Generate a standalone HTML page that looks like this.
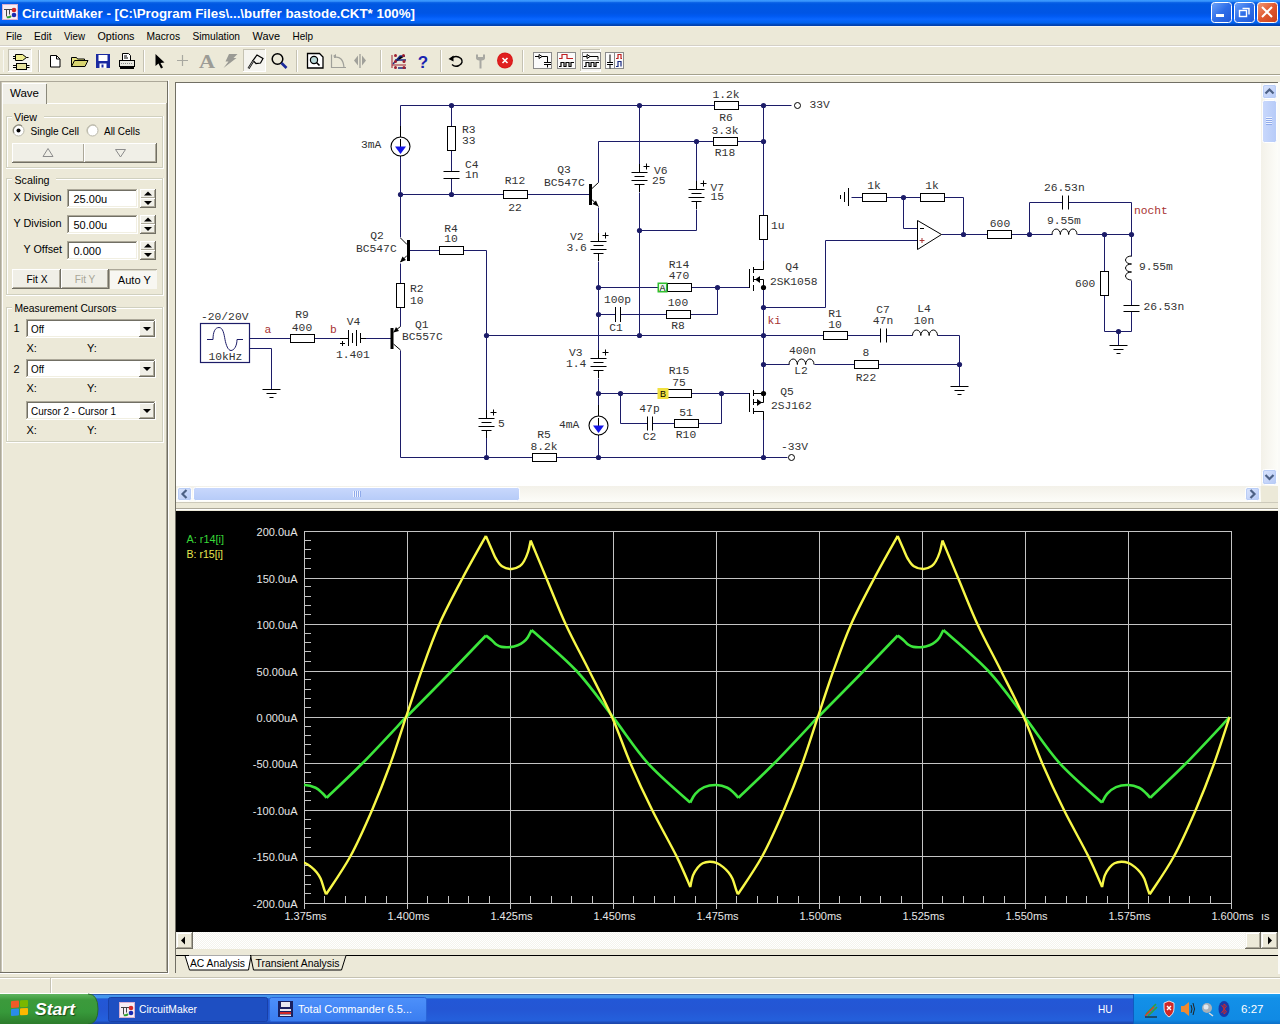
<!DOCTYPE html>
<html><head><meta charset="utf-8"><title>CircuitMaker</title>
<style>
html,body{margin:0;padding:0;width:1280px;height:1024px;overflow:hidden;background:#ece9d8;}
svg{display:block;position:absolute;left:0;top:0}
</style></head><body>
<svg width="1280" height="1024" viewBox="0 0 1280 1024">
<rect x="0" y="0" width="1280" height="1024" fill="#ece9d8"/>
<defs>
<linearGradient id="tb" x1="0" y1="0" x2="0" y2="1">
<stop offset="0" stop-color="#3c9cff"/><stop offset="0.05" stop-color="#3590fa"/><stop offset="0.1" stop-color="#0a62e6"/><stop offset="0.16" stop-color="#0058e2"/>
<stop offset="0.5" stop-color="#0055e5"/><stop offset="0.62" stop-color="#005af2"/><stop offset="0.74" stop-color="#0a66ff"/><stop offset="0.88" stop-color="#0062ee"/><stop offset="0.95" stop-color="#0045b8"/><stop offset="1" stop-color="#003ea8"/></linearGradient>
<linearGradient id="btnb" x1="0" y1="0" x2="1" y2="1"><stop offset="0" stop-color="#6ea4fa"/><stop offset="0.5" stop-color="#2f6ee8"/><stop offset="1" stop-color="#2059d8"/></linearGradient>
<linearGradient id="btnr" x1="0" y1="0" x2="1" y2="1"><stop offset="0" stop-color="#f09a78"/><stop offset="0.5" stop-color="#e0582e"/><stop offset="1" stop-color="#c8401c"/></linearGradient>
</defs>
<rect x="0" y="0" width="1280" height="26" fill="url(#tb)" />
<rect x="2" y="4" width="16" height="16" fill="#f6eef4" />
<g transform="translate(2,4)"><rect x="0.5" y="0.5" width="15" height="15" fill="none" stroke="#d8b0d0"/><path d="M2 5.5h8M4.5 5.5v7M7.5 5.5v5" stroke="#444" stroke-width="1" fill="none"/><circle cx="12" cy="6" r="2.3" fill="#d42828"/><circle cx="12" cy="11" r="2.3" fill="#1a2ab0"/><path d="M5 13q2 1 4 -1" stroke="#30a030" stroke-width="2" fill="none"/></g>
<text x="22" y="18" font-family="Liberation Sans" font-size="13" fill="#fff" font-weight="bold" textLength="393" lengthAdjust="spacingAndGlyphs" style="paint-order:stroke">CircuitMaker - [C:\Program Files\...\buffer bastode.CKT* 100%]</text>
<rect x="1211.5" y="2.5" width="20" height="20" rx="3" fill="url(#btnb)" stroke="#fff" stroke-width="1"/>
<rect x="1234.5" y="2.5" width="20" height="20" rx="3" fill="url(#btnb)" stroke="#fff" stroke-width="1"/>
<rect x="1257.5" y="2.5" width="20" height="20" rx="3" fill="url(#btnr)" stroke="#fff" stroke-width="1"/>
<rect x="1216" y="14" width="8" height="3" fill="#fff"/>
<rect x="1239.5" y="10.5" width="7" height="6" fill="none" stroke="#fff" stroke-width="1.4"/><path d="M1242.5 8.5h6.5v6" fill="none" stroke="#fff" stroke-width="1.4"/>
<path d="M1262 7l10 10M1272 7l-10 10" stroke="#fff" stroke-width="2"/>
<rect x="0" y="26" width="1280" height="50" fill="#ece9d8" />
<rect x="0" y="26" width="1280" height="1" fill="#f4f4f0"/>
<text x="6" y="39.5" font-family="Liberation Sans" font-size="11" fill="#000" textLength="16" lengthAdjust="spacingAndGlyphs" >File</text>
<text x="34" y="39.5" font-family="Liberation Sans" font-size="11" fill="#000" textLength="17.5" lengthAdjust="spacingAndGlyphs" >Edit</text>
<text x="64" y="39.5" font-family="Liberation Sans" font-size="11" fill="#000" textLength="21" lengthAdjust="spacingAndGlyphs" >View</text>
<text x="97.5" y="39.5" font-family="Liberation Sans" font-size="11" fill="#000" textLength="37" lengthAdjust="spacingAndGlyphs" >Options</text>
<text x="146.5" y="39.5" font-family="Liberation Sans" font-size="11" fill="#000" textLength="33.5" lengthAdjust="spacingAndGlyphs" >Macros</text>
<text x="192.5" y="39.5" font-family="Liberation Sans" font-size="11" fill="#000" textLength="47.5" lengthAdjust="spacingAndGlyphs" >Simulation</text>
<text x="252.5" y="39.5" font-family="Liberation Sans" font-size="11" fill="#000" textLength="27.5" lengthAdjust="spacingAndGlyphs" >Wave</text>
<text x="292.5" y="39.5" font-family="Liberation Sans" font-size="11" fill="#000" textLength="20.5" lengthAdjust="spacingAndGlyphs" >Help</text>
<rect x="0" y="45" width="1280" height="1" fill="#d4d0c8"/>
<rect x="0" y="46" width="1280" height="1" fill="#ffffff"/>
<rect x="0" y="74" width="1280" height="1" fill="#a5a28d"/>
<rect x="0" y="75" width="1280" height="1" fill="#ffffff"/>
<rect x="3" y="50" width="1" height="22" fill="#f8f8f4"/>
<rect x="8" y="49" width="24" height="23" fill="#f5f4ef" /><rect x="8" y="49" width="24" height="1" fill="#c5c2b2"/><rect x="8" y="49" width="1" height="23" fill="#c5c2b2"/><rect x="8" y="71" width="24" height="1" fill="#ffffff"/><rect x="31" y="49" width="1" height="23" fill="#ffffff"/>
<path d="M15.5 54.5h7l4 3-4 3h-7z" fill="#f0ee90" stroke="#000"/><path d="M13 56.5h2.5M13 58.5h2.5M26.5 57.5h2" stroke="#000"/>
<rect x="16.5" y="63.5" width="10" height="6" fill="#e6e2a0" stroke="#000"/><path d="M13 65.5h3.5M13 67.5h3.5M26.5 65.5h3M26.5 67.5h3" stroke="#000"/>
<rect x="38" y="50" width="1" height="22" fill="#c5c2b2"/><rect x="39" y="50" width="1" height="22" fill="#ffffff"/>
<path d="M50.5 55.5h6l3.5 3.5v8h-9.5z" fill="#fff" stroke="#000"/><path d="M56.5 55.5v3.5h3.5" fill="none" stroke="#000"/>
<path d="M71.5 57.5h5l1 1.5h7v7.5h-13z" fill="#e8e480" stroke="#000"/><path d="M71.5 66.5l3-6h13.5l-3 6z" fill="#d8d470" stroke="#000"/>
<rect x="96" y="54" width="14" height="14" fill="#1a2aa0"/><rect x="98.5" y="55" width="9" height="6" fill="#fff"/><rect x="99.5" y="63.5" width="7" height="4.5" fill="#fff"/><rect x="101.5" y="64.5" width="2" height="3" fill="#1a2aa0"/>
<path d="M122.5 53.5h6l2 2v5h-8z" fill="#fff" stroke="#000"/><path d="M124 56h3M124 58h4" stroke="#000"/><rect x="119.5" y="60.5" width="15" height="6" fill="#e8e8e0" stroke="#000"/><rect x="120" y="67" width="14" height="2" fill="#000"/><path d="M121 63.5h12" stroke="#888" stroke-dasharray="1 1"/>
<rect x="143" y="50" width="1" height="22" fill="#c5c2b2"/><rect x="144" y="50" width="1" height="22" fill="#ffffff"/>
<path d="M155.5 54l0 12 3-2.5 2.5 5 2-1-2.5-4.5 4 -0.5z" fill="#000"/>
<path d="M177 60.5h11M182.5 55v11" stroke="#a8a8a0" stroke-width="1.2"/>
<text x="199" y="68" font-family="Liberation Serif" font-size="19" fill="#9c9c96" font-weight="bold" textLength="16" lengthAdjust="spacingAndGlyphs" >A</text>
<path d="M229 54h8.5l-4 4h3l-13 10 5-6.5h-3z" fill="#9a9a94"/>
<rect x="243" y="49" width="23" height="23" fill="#f5f4ef" /><rect x="243" y="49" width="23" height="1" fill="#c5c2b2"/><rect x="243" y="49" width="1" height="23" fill="#c5c2b2"/><rect x="243" y="71" width="23" height="1" fill="#ffffff"/><rect x="265" y="49" width="1" height="23" fill="#ffffff"/>
<path d="M257 55l6 3.5-2.5 4.5-4.5 0.5-3-3z" fill="none" stroke="#000" stroke-width="1.2"/><path d="M253.5 60.5l-5 8" stroke="#000" stroke-width="2.2"/><path d="M253.5 60.5l-5 8" stroke="#fff" stroke-width="0.6"/>
<circle cx="277.5" cy="59" r="5.3" fill="none" stroke="#000" stroke-width="1.5"/><path d="M281.5 63l5 5" stroke="#1a2a9a" stroke-width="2.6"/>
<rect x="296" y="50" width="1" height="22" fill="#c5c2b2"/><rect x="297" y="50" width="1" height="22" fill="#ffffff"/>
<path d="M307.5 53.5h12l3.5 3.5v11h-15.5z" fill="#fff" stroke="#000" stroke-width="1.3"/><circle cx="314" cy="60" r="3.6" fill="#b8d8d8" stroke="#000" stroke-width="1.2"/><path d="M316.5 62.5l3 3" stroke="#000" stroke-width="1.6"/>
<path d="M331.5 54.5v13h14.5M334 57.5q9 -2 10 10" fill="none" stroke="#a0a09a" stroke-width="1.2"/><path d="M333 56l3-2v4z" fill="#a0a09a"/>
<path d="M360 54v14" stroke="#a0a09a" stroke-width="1.3"/><path d="M358 55.5v10l-4-5z M362 55.5v10l4-5z" fill="#a0a09a"/>
<rect x="380" y="50" width="1" height="22" fill="#c5c2b2"/><rect x="381" y="50" width="1" height="22" fill="#ffffff"/>
<path d="M392 55v13M392 65h14" stroke="#a02030" stroke-width="1"/><path d="M393 64l7-8h5M395 60h11M398 68h8" stroke="#1a2a80" stroke-width="1.3"/><circle cx="395.5" cy="55.5" r="1.5" fill="#a02030"/><circle cx="403.5" cy="55.5" r="1.5" fill="#a02030"/><circle cx="395.5" cy="61.5" r="1.5" fill="#a02030"/><circle cx="404" cy="61.5" r="1.5" fill="#a02030"/><circle cx="395.5" cy="67.5" r="1.5" fill="#a02030"/><circle cx="404" cy="67.5" r="1.5" fill="#a02030"/>
<text x="423" y="68" font-family="Liberation Sans" font-size="17" fill="#1a24b0" font-weight="bold" text-anchor="middle" >?</text>
<rect x="440" y="50" width="1" height="22" fill="#c5c2b2"/><rect x="441" y="50" width="1" height="22" fill="#ffffff"/>
<path d="M451 58.5q5-4 10 0q3 4 -2 7q-4 2 -7 -1" fill="none" stroke="#000" stroke-width="1.4"/><path d="M448.5 59l5 -3.5v6z" fill="#000"/>
<path d="M476 54.5v3.5q0 2 3.5 2.5v8h2v-8q3.5-0.5 3.5-2.5v-3.5l-2 0v2.5h-5v-2.5z" fill="#a8a8a2"/>
<circle cx="505" cy="60.5" r="8" fill="#d81818"/><circle cx="505" cy="60.5" r="7" fill="#e02020"/><path d="M502.5 58l5 5M507.5 58l-5 5" stroke="#fff" stroke-width="1.6"/>
<rect x="522" y="50" width="1" height="22" fill="#c5c2b2"/><rect x="523" y="50" width="1" height="22" fill="#ffffff"/>
<rect x="533.5" y="52.5" width="18" height="16" fill="#fafafa" stroke="#8a8a8a"/><path d="M535 56.5h4M539 54.5v4l3 -2z" stroke="#000" fill="none"/><path d="M542 56.5h5.5v6M544 62.5h7M544 64.5h7M547.5 64.5v3" stroke="#000" fill="none"/>
<rect x="557.5" y="52.5" width="18" height="16" fill="#fafafa" stroke="#8a8a8a"/><path d="M559 58.5h3v-4h5v4h6" stroke="#c02020" fill="none" stroke-width="1.2"/><path d="M559 66.5h2v-4h3v4h2v-4h3v4h2v-4h3" stroke="#000" fill="none" stroke-width="1.2"/>
<rect x="580" y="49" width="21" height="23" fill="#f5f4ef" /><rect x="580" y="49" width="21" height="1" fill="#c5c2b2"/><rect x="580" y="49" width="1" height="23" fill="#c5c2b2"/><rect x="580" y="71" width="21" height="1" fill="#ffffff"/><rect x="600" y="49" width="1" height="23" fill="#ffffff"/>
<rect x="582.5" y="52.5" width="18" height="16" fill="#fafafa" stroke="#8a8a8a"/><path d="M583 56.5h4M587 54.5v4l3 -2z" stroke="#000" fill="none"/><path d="M590 56.5h8v3" stroke="#000" fill="none"/><path d="M583 60.5h17" stroke="#888" fill="none"/><path d="M584 66.5h2v-4h3v4h2v-4h3v4h2v-4h3" stroke="#000" fill="none" stroke-width="1.2"/>
<rect x="605.5" y="52.5" width="18" height="16" fill="#fafafa" stroke="#8a8a8a"/><path d="M607 62.5h6M607 64.5h6M610 54.5v8M610 64.5v4" stroke="#000" fill="none"/><path d="M614.5 53v16" stroke="#888"/><path d="M616 58.5h2v-4h3v4h1" stroke="#c02020" fill="none" stroke-width="1.2"/><path d="M616 66.5h2v-5h3v5" stroke="#1a2a80" fill="none" stroke-width="1.2"/>
<rect x="0" y="81" width="168" height="1" fill="#aca899"/>
<rect x="0" y="81" width="1" height="892" fill="#aca899"/>
<rect x="1" y="82" width="1" height="890" fill="#c8c5b6"/>
<rect x="167" y="81" width="1" height="892" fill="#716f64"/>
<rect x="0" y="972" width="168" height="1" fill="#716f64"/>
<rect x="168" y="80" width="1" height="894" fill="#ffffff"/>
<rect x="0" y="973" width="169" height="1" fill="#ffffff"/>
<rect x="2" y="103" width="165" height="1" fill="#ffffff"/>
<rect x="2" y="103" width="1" height="868" fill="#ffffff"/>
<rect x="166" y="103" width="1" height="868" fill="#aca899"/>
<rect x="2" y="83" width="45" height="21" fill="#f0efe8" />
<rect x="2" y="83" width="44" height="1" fill="#ffffff"/>
<rect x="2" y="83" width="1" height="21" fill="#ffffff"/>
<rect x="46" y="84" width="1" height="20" fill="#8a887a"/>
<text x="10" y="96.5" font-family="Liberation Sans" font-size="11" fill="#000" textLength="29" lengthAdjust="spacingAndGlyphs" >Wave</text>
<rect x="6" y="116" width="156" height="1" fill="#d0d0bf"/><rect x="7" y="117" width="155" height="1" fill="#ffffff"/><rect x="6" y="116" width="1" height="51" fill="#d0d0bf"/><rect x="7" y="117" width="1" height="50" fill="#ffffff"/><rect x="6" y="167" width="156" height="1" fill="#d0d0bf"/><rect x="6" y="168" width="157" height="1" fill="#ffffff"/><rect x="162" y="116" width="1" height="52" fill="#d0d0bf"/><rect x="163" y="116" width="1" height="53" fill="#ffffff"/><rect x="12" y="110" width="32" height="12" fill="#ece9d8" />
<text x="14" y="120.5" font-family="Liberation Sans" font-size="11" fill="#000" textLength="23" lengthAdjust="spacingAndGlyphs" >View</text>
<circle cx="18.5" cy="130.5" r="5.5" fill="#fff" stroke="#b8b6a8"/><path d="M14 133a5.5 5.5 0 0 1 8-7" fill="none" stroke="#8c8a7c" stroke-width="1.2"/><circle cx="18.5" cy="130.5" r="2" fill="#000"/>
<text x="30.5" y="134.5" font-family="Liberation Sans" font-size="11" fill="#000" textLength="48.5" lengthAdjust="spacingAndGlyphs" >Single Cell</text>
<circle cx="92.5" cy="130.5" r="5.5" fill="#fff" stroke="#b8b6a8"/><path d="M88 133a5.5 5.5 0 0 1 8-7" fill="none" stroke="#c0beb0" stroke-width="1.2"/>
<text x="104" y="134.5" font-family="Liberation Sans" font-size="11" fill="#000" textLength="36" lengthAdjust="spacingAndGlyphs" >All Cells</text>
<rect x="12" y="143" width="73" height="20" fill="#f0efe7" /><rect x="12" y="143" width="73" height="1" fill="#ffffff"/><rect x="12" y="143" width="1" height="20" fill="#ffffff"/><rect x="12" y="162" width="73" height="1" fill="#716f64"/><rect x="84" y="143" width="1" height="20" fill="#716f64"/><rect x="13" y="161" width="71" height="1" fill="#aca899"/><rect x="83" y="144" width="1" height="18" fill="#aca899"/>
<rect x="84" y="143" width="73" height="20" fill="#f0efe7" /><rect x="84" y="143" width="73" height="1" fill="#ffffff"/><rect x="84" y="143" width="1" height="20" fill="#ffffff"/><rect x="84" y="162" width="73" height="1" fill="#716f64"/><rect x="156" y="143" width="1" height="20" fill="#716f64"/><rect x="85" y="161" width="71" height="1" fill="#aca899"/><rect x="155" y="144" width="1" height="18" fill="#aca899"/>
<path d="M43 156.5h10l-5-8z" fill="none" stroke="#8c8c8c"/><path d="M115.5 149.5h10l-5 7.5z" fill="none" stroke="#8c8c8c"/>
<rect x="6" y="178" width="156" height="1" fill="#d0d0bf"/><rect x="7" y="179" width="155" height="1" fill="#ffffff"/><rect x="6" y="178" width="1" height="116" fill="#d0d0bf"/><rect x="7" y="179" width="1" height="115" fill="#ffffff"/><rect x="6" y="294" width="156" height="1" fill="#d0d0bf"/><rect x="6" y="295" width="157" height="1" fill="#ffffff"/><rect x="162" y="178" width="1" height="117" fill="#d0d0bf"/><rect x="163" y="178" width="1" height="118" fill="#ffffff"/><rect x="12" y="172" width="44" height="12" fill="#ece9d8" />
<text x="14.5" y="183.5" font-family="Liberation Sans" font-size="11" fill="#000" textLength="35" lengthAdjust="spacingAndGlyphs" >Scaling</text>
<text x="13.5" y="200.5" font-family="Liberation Sans" font-size="11" fill="#000" textLength="48" lengthAdjust="spacingAndGlyphs" >X Division</text>
<rect x="67" y="189" width="71" height="19" fill="#ffffff" /><rect x="67" y="189" width="71" height="1" fill="#aca899"/><rect x="67" y="189" width="1" height="19" fill="#aca899"/><rect x="68" y="190" width="69" height="1" fill="#716f64"/><rect x="68" y="190" width="1" height="17" fill="#716f64"/><rect x="67" y="207" width="71" height="1" fill="#ffffff"/><rect x="137" y="189" width="1" height="19" fill="#ffffff"/><rect x="68" y="206" width="69" height="1" fill="#f1efe2"/><rect x="136" y="190" width="1" height="17" fill="#f1efe2"/>
<text x="73.5" y="203" font-family="Liberation Sans" font-size="11" fill="#000" >25.00u</text>
<rect x="140" y="189" width="16" height="10" fill="#f0efe7" /><rect x="140" y="189" width="16" height="1" fill="#ffffff"/><rect x="140" y="189" width="1" height="10" fill="#ffffff"/><rect x="140" y="198" width="16" height="1" fill="#716f64"/><rect x="155" y="189" width="1" height="10" fill="#716f64"/><rect x="141" y="197" width="14" height="1" fill="#aca899"/><rect x="154" y="190" width="1" height="8" fill="#aca899"/><rect x="140" y="198" width="16" height="10" fill="#f0efe7" /><rect x="140" y="198" width="16" height="1" fill="#ffffff"/><rect x="140" y="198" width="1" height="10" fill="#ffffff"/><rect x="140" y="207" width="16" height="1" fill="#716f64"/><rect x="155" y="198" width="1" height="10" fill="#716f64"/><rect x="141" y="206" width="14" height="1" fill="#aca899"/><rect x="154" y="199" width="1" height="8" fill="#aca899"/><path d="M144.0 195.5h8l-4-4z" fill="#000"/><path d="M144.0 201h8l-4 4z" fill="#000"/>
<text x="13.5" y="226.5" font-family="Liberation Sans" font-size="11" fill="#000" textLength="48" lengthAdjust="spacingAndGlyphs" >Y Division</text>
<rect x="67" y="215" width="71" height="19" fill="#ffffff" /><rect x="67" y="215" width="71" height="1" fill="#aca899"/><rect x="67" y="215" width="1" height="19" fill="#aca899"/><rect x="68" y="216" width="69" height="1" fill="#716f64"/><rect x="68" y="216" width="1" height="17" fill="#716f64"/><rect x="67" y="233" width="71" height="1" fill="#ffffff"/><rect x="137" y="215" width="1" height="19" fill="#ffffff"/><rect x="68" y="232" width="69" height="1" fill="#f1efe2"/><rect x="136" y="216" width="1" height="17" fill="#f1efe2"/>
<text x="73.5" y="229" font-family="Liberation Sans" font-size="11" fill="#000" >50.00u</text>
<rect x="140" y="215" width="16" height="10" fill="#f0efe7" /><rect x="140" y="215" width="16" height="1" fill="#ffffff"/><rect x="140" y="215" width="1" height="10" fill="#ffffff"/><rect x="140" y="224" width="16" height="1" fill="#716f64"/><rect x="155" y="215" width="1" height="10" fill="#716f64"/><rect x="141" y="223" width="14" height="1" fill="#aca899"/><rect x="154" y="216" width="1" height="8" fill="#aca899"/><rect x="140" y="224" width="16" height="10" fill="#f0efe7" /><rect x="140" y="224" width="16" height="1" fill="#ffffff"/><rect x="140" y="224" width="1" height="10" fill="#ffffff"/><rect x="140" y="233" width="16" height="1" fill="#716f64"/><rect x="155" y="224" width="1" height="10" fill="#716f64"/><rect x="141" y="232" width="14" height="1" fill="#aca899"/><rect x="154" y="225" width="1" height="8" fill="#aca899"/><path d="M144.0 221.5h8l-4-4z" fill="#000"/><path d="M144.0 227h8l-4 4z" fill="#000"/>
<text x="23.5" y="252.5" font-family="Liberation Sans" font-size="11" fill="#000" textLength="38.5" lengthAdjust="spacingAndGlyphs" >Y Offset</text>
<rect x="67" y="241" width="71" height="19" fill="#ffffff" /><rect x="67" y="241" width="71" height="1" fill="#aca899"/><rect x="67" y="241" width="1" height="19" fill="#aca899"/><rect x="68" y="242" width="69" height="1" fill="#716f64"/><rect x="68" y="242" width="1" height="17" fill="#716f64"/><rect x="67" y="259" width="71" height="1" fill="#ffffff"/><rect x="137" y="241" width="1" height="19" fill="#ffffff"/><rect x="68" y="258" width="69" height="1" fill="#f1efe2"/><rect x="136" y="242" width="1" height="17" fill="#f1efe2"/>
<text x="73.5" y="255" font-family="Liberation Sans" font-size="11" fill="#000" >0.000</text>
<rect x="140" y="241" width="16" height="10" fill="#f0efe7" /><rect x="140" y="241" width="16" height="1" fill="#ffffff"/><rect x="140" y="241" width="1" height="10" fill="#ffffff"/><rect x="140" y="250" width="16" height="1" fill="#716f64"/><rect x="155" y="241" width="1" height="10" fill="#716f64"/><rect x="141" y="249" width="14" height="1" fill="#aca899"/><rect x="154" y="242" width="1" height="8" fill="#aca899"/><rect x="140" y="250" width="16" height="10" fill="#f0efe7" /><rect x="140" y="250" width="16" height="1" fill="#ffffff"/><rect x="140" y="250" width="1" height="10" fill="#ffffff"/><rect x="140" y="259" width="16" height="1" fill="#716f64"/><rect x="155" y="250" width="1" height="10" fill="#716f64"/><rect x="141" y="258" width="14" height="1" fill="#aca899"/><rect x="154" y="251" width="1" height="8" fill="#aca899"/><path d="M144.0 247.5h8l-4-4z" fill="#000"/><path d="M144.0 253h8l-4 4z" fill="#000"/>
<rect x="12" y="269" width="49" height="20" fill="#f0efe7" /><rect x="12" y="269" width="49" height="1" fill="#ffffff"/><rect x="12" y="269" width="1" height="20" fill="#ffffff"/><rect x="12" y="288" width="49" height="1" fill="#716f64"/><rect x="60" y="269" width="1" height="20" fill="#716f64"/><rect x="13" y="287" width="47" height="1" fill="#aca899"/><rect x="59" y="270" width="1" height="18" fill="#aca899"/>
<rect x="61" y="269" width="48" height="20" fill="#f0efe7" /><rect x="61" y="269" width="48" height="1" fill="#ffffff"/><rect x="61" y="269" width="1" height="20" fill="#ffffff"/><rect x="61" y="288" width="48" height="1" fill="#716f64"/><rect x="108" y="269" width="1" height="20" fill="#716f64"/><rect x="62" y="287" width="46" height="1" fill="#aca899"/><rect x="107" y="270" width="1" height="18" fill="#aca899"/>
<rect x="109" y="269" width="48" height="20" fill="#f8f7f2" /><rect x="109" y="269" width="48" height="1" fill="#aca899"/><rect x="109" y="269" width="1" height="20" fill="#aca899"/><rect x="110" y="270" width="46" height="1" fill="#dcdacc"/>
<text x="37" y="283" font-family="Liberation Sans" font-size="11" fill="#000" text-anchor="middle" textLength="21" lengthAdjust="spacingAndGlyphs" >Fit X</text>
<text x="85" y="283" font-family="Liberation Sans" font-size="11" fill="#a8a698" text-anchor="middle" textLength="20.5" lengthAdjust="spacingAndGlyphs" >Fit Y</text>
<text x="134.3" y="283.5" font-family="Liberation Sans" font-size="11" fill="#000" text-anchor="middle" textLength="33" lengthAdjust="spacingAndGlyphs" >Auto Y</text>
<rect x="6" y="307" width="156" height="1" fill="#d0d0bf"/><rect x="7" y="308" width="155" height="1" fill="#ffffff"/><rect x="6" y="307" width="1" height="134" fill="#d0d0bf"/><rect x="7" y="308" width="1" height="133" fill="#ffffff"/><rect x="6" y="441" width="156" height="1" fill="#d0d0bf"/><rect x="6" y="442" width="157" height="1" fill="#ffffff"/><rect x="162" y="307" width="1" height="135" fill="#d0d0bf"/><rect x="163" y="307" width="1" height="136" fill="#ffffff"/><rect x="12" y="301" width="104" height="12" fill="#ece9d8" />
<text x="14.5" y="311.5" font-family="Liberation Sans" font-size="11" fill="#000" textLength="102" lengthAdjust="spacingAndGlyphs" >Measurement Cursors</text>
<text x="13.5" y="332" font-family="Liberation Sans" font-size="11" fill="#000" >1</text>
<rect x="26" y="319" width="130" height="19" fill="#ffffff" /><rect x="26" y="319" width="130" height="1" fill="#aca899"/><rect x="26" y="319" width="1" height="19" fill="#aca899"/><rect x="27" y="320" width="128" height="1" fill="#716f64"/><rect x="27" y="320" width="1" height="17" fill="#716f64"/><rect x="26" y="337" width="130" height="1" fill="#ffffff"/><rect x="155" y="319" width="1" height="19" fill="#ffffff"/><rect x="27" y="336" width="128" height="1" fill="#f1efe2"/><rect x="154" y="320" width="1" height="17" fill="#f1efe2"/><rect x="139" y="321" width="16" height="16" fill="#f0efe7" /><rect x="139" y="321" width="16" height="1" fill="#ffffff"/><rect x="139" y="321" width="1" height="16" fill="#ffffff"/><rect x="139" y="336" width="16" height="1" fill="#716f64"/><rect x="154" y="321" width="1" height="16" fill="#716f64"/><rect x="140" y="335" width="14" height="1" fill="#aca899"/><rect x="153" y="322" width="1" height="14" fill="#aca899"/><path d="M143 327.0h8l-4 4z" fill="#000"/><text x="31" y="332.5" font-family="Liberation Sans" font-size="11" fill="#000" textLength="13" lengthAdjust="spacingAndGlyphs" >Off</text>
<text x="26.5" y="352" font-family="Liberation Sans" font-size="11" fill="#000" >X:</text>
<text x="87" y="352" font-family="Liberation Sans" font-size="11" fill="#000" >Y:</text>
<text x="13.5" y="372.5" font-family="Liberation Sans" font-size="11" fill="#000" >2</text>
<rect x="26" y="359" width="130" height="19" fill="#ffffff" /><rect x="26" y="359" width="130" height="1" fill="#aca899"/><rect x="26" y="359" width="1" height="19" fill="#aca899"/><rect x="27" y="360" width="128" height="1" fill="#716f64"/><rect x="27" y="360" width="1" height="17" fill="#716f64"/><rect x="26" y="377" width="130" height="1" fill="#ffffff"/><rect x="155" y="359" width="1" height="19" fill="#ffffff"/><rect x="27" y="376" width="128" height="1" fill="#f1efe2"/><rect x="154" y="360" width="1" height="17" fill="#f1efe2"/><rect x="139" y="361" width="16" height="16" fill="#f0efe7" /><rect x="139" y="361" width="16" height="1" fill="#ffffff"/><rect x="139" y="361" width="1" height="16" fill="#ffffff"/><rect x="139" y="376" width="16" height="1" fill="#716f64"/><rect x="154" y="361" width="1" height="16" fill="#716f64"/><rect x="140" y="375" width="14" height="1" fill="#aca899"/><rect x="153" y="362" width="1" height="14" fill="#aca899"/><path d="M143 367.0h8l-4 4z" fill="#000"/><text x="31" y="372.5" font-family="Liberation Sans" font-size="11" fill="#000" textLength="13" lengthAdjust="spacingAndGlyphs" >Off</text>
<text x="26.5" y="392" font-family="Liberation Sans" font-size="11" fill="#000" >X:</text>
<text x="87" y="392" font-family="Liberation Sans" font-size="11" fill="#000" >Y:</text>
<rect x="26" y="401" width="130" height="19" fill="#ffffff" /><rect x="26" y="401" width="130" height="1" fill="#aca899"/><rect x="26" y="401" width="1" height="19" fill="#aca899"/><rect x="27" y="402" width="128" height="1" fill="#716f64"/><rect x="27" y="402" width="1" height="17" fill="#716f64"/><rect x="26" y="419" width="130" height="1" fill="#ffffff"/><rect x="155" y="401" width="1" height="19" fill="#ffffff"/><rect x="27" y="418" width="128" height="1" fill="#f1efe2"/><rect x="154" y="402" width="1" height="17" fill="#f1efe2"/><rect x="139" y="403" width="16" height="16" fill="#f0efe7" /><rect x="139" y="403" width="16" height="1" fill="#ffffff"/><rect x="139" y="403" width="1" height="16" fill="#ffffff"/><rect x="139" y="418" width="16" height="1" fill="#716f64"/><rect x="154" y="403" width="1" height="16" fill="#716f64"/><rect x="140" y="417" width="14" height="1" fill="#aca899"/><rect x="153" y="404" width="1" height="14" fill="#aca899"/><path d="M143 409.0h8l-4 4z" fill="#000"/><text x="31" y="414.5" font-family="Liberation Sans" font-size="11" fill="#000" textLength="85" lengthAdjust="spacingAndGlyphs" >Cursor 2 - Cursor 1</text>
<text x="26.5" y="434" font-family="Liberation Sans" font-size="11" fill="#000" >X:</text>
<text x="87" y="434" font-family="Liberation Sans" font-size="11" fill="#000" >Y:</text>
<defs>
<linearGradient id="sbbtn" x1="0" y1="0" x2="1" y2="1"><stop offset="0" stop-color="#dce6fd"/><stop offset="1" stop-color="#b4c8f6"/></linearGradient>
<linearGradient id="vtrack" x1="0" y1="0" x2="1" y2="0"><stop offset="0" stop-color="#f3f1e9"/><stop offset="1" stop-color="#fdfdf9"/></linearGradient>
<linearGradient id="htrack" x1="0" y1="0" x2="0" y2="1"><stop offset="0" stop-color="#f3f1e9"/><stop offset="1" stop-color="#fdfdf9"/></linearGradient>
<linearGradient id="vthumb" x1="0" y1="0" x2="1" y2="0"><stop offset="0" stop-color="#c9d8fc"/><stop offset="1" stop-color="#b6cbf8"/></linearGradient>
<linearGradient id="hthumb" x1="0" y1="0" x2="0" y2="1"><stop offset="0" stop-color="#c9d8fc"/><stop offset="1" stop-color="#b6cbf8"/></linearGradient>
</defs>
<rect x="175" y="82" width="1105" height="1" fill="#716f64"/>
<rect x="175" y="82" width="1" height="427" fill="#716f64"/>
<rect x="176" y="83" width="1085" height="403" fill="#ffffff" />
<rect x="1261" y="83" width="17" height="403" fill="url(#vtrack)" />
<rect x="1262.5" y="84.5" width="14" height="14" rx="2" fill="url(#sbbtn)" stroke="#fff"/><rect x="1263.5" y="85.5" width="12" height="12" rx="1.5" fill="none" stroke="#b9cdf6"/><path d="M1265.5 93.5l4-4 4 4" fill="none" stroke="#4d6185" stroke-width="2.2"/>
<rect x="1262.5" y="100.5" width="14" height="42" rx="2" fill="url(#vthumb)" stroke="#fff"/>
<path d="M1266 117.5h6M1266 119.5h6M1266 121.5h6M1266 123.5h6" stroke="#eef3fe" stroke-width="1"/><path d="M1266 118.5h6M1266 120.5h6M1266 122.5h6M1266 124.5h6" stroke="#8faaea" stroke-width="1"/>
<rect x="1262.5" y="469.5" width="14" height="15" rx="2" fill="url(#sbbtn)" stroke="#fff"/><rect x="1263.5" y="470.5" width="12" height="13" rx="1.5" fill="none" stroke="#b9cdf6"/><path d="M1265.5 475.0l4 4 4-4" fill="none" stroke="#4d6185" stroke-width="2.2"/>
<rect x="176" y="486" width="1085" height="16" fill="url(#htrack)" />
<rect x="1261" y="486" width="19" height="16" fill="#ece9d8" />
<rect x="177.5" y="487.5" width="14" height="13" rx="2" fill="url(#sbbtn)" stroke="#fff"/><rect x="178.5" y="488.5" width="12" height="11" rx="1.5" fill="none" stroke="#b9cdf6"/><path d="M186.5 490.0l-4 4 4 4" fill="none" stroke="#4d6185" stroke-width="2.2"/>
<rect x="193.5" y="487.5" width="326" height="13" rx="2" fill="url(#hthumb)" stroke="#fff"/>
<path d="M353.5 491v6M355.5 491v6M357.5 491v6M359.5 491v6" stroke="#eef3fe"/><path d="M354.5 491v6M356.5 491v6M358.5 491v6M360.5 491v6" stroke="#8faaea"/>
<rect x="1245.5" y="487.5" width="14" height="13" rx="2" fill="url(#sbbtn)" stroke="#fff"/><rect x="1246.5" y="488.5" width="12" height="11" rx="1.5" fill="none" stroke="#b9cdf6"/><path d="M1250.5 490.0l4 4-4 4" fill="none" stroke="#4d6185" stroke-width="2.2"/>
<rect x="176" y="502" width="1104" height="1" fill="#cdcabb"/>
<rect x="176" y="508" width="1104" height="1" fill="#aca899"/>
<rect x="176" y="509" width="1104" height="1" fill="#ffffff"/>
<rect x="1278" y="82" width="2" height="911" fill="#fbfbf8"/>
<g>
<path d="M400.5 126.5 L400.5 105.5 L791.5 105.5" stroke="#1c1c68" fill="none"/>
<path d="M400.5 156.5 L400.5 237.5" stroke="#1c1c68" fill="none"/>
<path d="M400.5 263.5 L400.5 283.5" stroke="#1c1c68" fill="none"/>
<path d="M400.5 307.5 L400.5 326.5" stroke="#1c1c68" fill="none"/>
<path d="M400.5 350.5 L400.5 457.5 L787.5 457.5" stroke="#1c1c68" fill="none"/>
<path d="M451.5 105.5 L451.5 126.5" stroke="#1c1c68" fill="none"/>
<path d="M451.5 150.5 L451.5 171.5" stroke="#1c1c68" fill="none"/>
<path d="M451.5 178.5 L451.5 194.5" stroke="#1c1c68" fill="none"/>
<path d="M400.5 194.5 L590.5 194.5" stroke="#1c1c68" fill="none"/>
<path d="M408.5 250.5 L439.5 250.5" stroke="#1c1c68" fill="none"/>
<path d="M463.5 250.5 L486.5 250.5 L486.5 413.5" stroke="#1c1c68" fill="none"/>
<path d="M486.5 430.5 L486.5 457.5" stroke="#1c1c68" fill="none"/>
<path d="M598.5 182.5 L598.5 141.5 L713.5 141.5" stroke="#1c1c68" fill="none"/>
<path d="M737.5 141.5 L763.5 141.5" stroke="#1c1c68" fill="none"/>
<path d="M598.5 207.5 L598.5 233.5" stroke="#1c1c68" fill="none"/>
<path d="M598.5 261.5 L598.5 350.5" stroke="#1c1c68" fill="none"/>
<path d="M598.5 378.5 L598.5 416.5" stroke="#1c1c68" fill="none"/>
<path d="M598.5 435.5 L598.5 457.5" stroke="#1c1c68" fill="none"/>
<path d="M639.5 105.5 L639.5 164.5" stroke="#1c1c68" fill="none"/>
<path d="M639.5 192.5 L639.5 335.5" stroke="#1c1c68" fill="none"/>
<path d="M639.5 230.5 L696.5 230.5 L696.5 209.5" stroke="#1c1c68" fill="none"/>
<path d="M696.5 141.5 L696.5 181.5" stroke="#1c1c68" fill="none"/>
<path d="M738.5 105.5 L763.5 105.5" stroke="#1c1c68" fill="none"/>
<path d="M763.5 105.5 L763.5 215.5" stroke="#1c1c68" fill="none"/>
<path d="M763.5 239.5 L763.5 261.5" stroke="#1c1c68" fill="none"/>
<path d="M598.5 287.5 L667.5 287.5" stroke="#1c1c68" fill="none"/>
<path d="M691.5 287.5 L749.5 287.5" stroke="#1c1c68" fill="none"/>
<path d="M598.5 314.5 L615.5 314.5" stroke="#1c1c68" fill="none"/>
<path d="M620.5 314.5 L666.5 314.5" stroke="#1c1c68" fill="none"/>
<path d="M690.5 314.5 L717.5 314.5 L717.5 287.5" stroke="#1c1c68" fill="none"/>
<path d="M486.5 335.5 L823.5 335.5" stroke="#1c1c68" fill="none"/>
<path d="M847.5 335.5 L880.5 335.5" stroke="#1c1c68" fill="none"/>
<path d="M886.5 335.5 L912.5 335.5" stroke="#1c1c68" fill="none"/>
<path d="M937.5 335.5 L959.5 335.5 L959.5 386.5" stroke="#1c1c68" fill="none"/>
<path d="M763.5 287.5 L763.5 393.5" stroke="#1c1c68" fill="none"/>
<path d="M763.5 307.5 L825.5 307.5 L825.5 240.5 L917.5 240.5" stroke="#1c1c68" fill="none"/>
<path d="M763.5 364.5 L789.5 364.5" stroke="#1c1c68" fill="none"/>
<path d="M814.5 364.5 L854.5 364.5" stroke="#1c1c68" fill="none"/>
<path d="M878.5 364.5 L959.5 364.5" stroke="#1c1c68" fill="none"/>
<path d="M598.5 393.5 L667.5 393.5" stroke="#1c1c68" fill="none"/>
<path d="M691.5 393.5 L749.5 393.5" stroke="#1c1c68" fill="none"/>
<path d="M620.5 393.5 L620.5 423.5 L647.5 423.5" stroke="#1c1c68" fill="none"/>
<path d="M652.5 423.5 L674.5 423.5" stroke="#1c1c68" fill="none"/>
<path d="M698.5 423.5 L721.5 423.5 L721.5 393.5" stroke="#1c1c68" fill="none"/>
<path d="M763.5 411.5 L763.5 457.5" stroke="#1c1c68" fill="none"/>
<path d="M532.5 457.5 L532.5 457.5" stroke="#1c1c68" fill="none"/>
<path d="M851.5 197.5 L862.5 197.5" stroke="#1c1c68" fill="none"/>
<path d="M886.5 197.5 L920.5 197.5" stroke="#1c1c68" fill="none"/>
<path d="M944.5 197.5 L963.5 197.5 L963.5 234.5" stroke="#1c1c68" fill="none"/>
<path d="M903.5 197.5 L903.5 228.5 L917.5 228.5" stroke="#1c1c68" fill="none"/>
<path d="M941.5 234.5 L987.5 234.5" stroke="#1c1c68" fill="none"/>
<path d="M1011.5 234.5 L1052.5 234.5" stroke="#1c1c68" fill="none"/>
<path d="M1077.5 234.5 L1131.5 234.5" stroke="#1c1c68" fill="none"/>
<path d="M1029.5 234.5 L1029.5 202.5 L1062.5 202.5" stroke="#1c1c68" fill="none"/>
<path d="M1068.5 202.5 L1131.5 202.5 L1131.5 256.5" stroke="#1c1c68" fill="none"/>
<path d="M1104.5 234.5 L1104.5 271.5" stroke="#1c1c68" fill="none"/>
<path d="M1104.5 295.5 L1104.5 331.5 L1131.5 331.5 L1131.5 311.5" stroke="#1c1c68" fill="none"/>
<path d="M1131.5 280.5 L1131.5 305.5" stroke="#1c1c68" fill="none"/>
<path d="M1118.5 331.5 L1118.5 345.5" stroke="#1c1c68" fill="none"/>
<path d="M249.5 338.5 L290.5 338.5" stroke="#1c1c68" fill="none"/>
<path d="M314.5 338.5 L348.5 338.5" stroke="#1c1c68" fill="none"/>
<path d="M360.5 338.5 L392.5 338.5" stroke="#1c1c68" fill="none"/>
<path d="M249.5 348.5 L271.5 348.5 L271.5 389.5" stroke="#1c1c68" fill="none"/>
<circle cx="451.5" cy="105.5" r="2.6" fill="#1c1c68"/>
<circle cx="639.5" cy="105.5" r="2.6" fill="#1c1c68"/>
<circle cx="763.5" cy="105.5" r="2.6" fill="#1c1c68"/>
<circle cx="696.5" cy="141.5" r="2.6" fill="#1c1c68"/>
<circle cx="763.5" cy="141.5" r="2.6" fill="#1c1c68"/>
<circle cx="400.5" cy="194.5" r="2.6" fill="#1c1c68"/>
<circle cx="451.5" cy="194.5" r="2.6" fill="#1c1c68"/>
<circle cx="639.5" cy="230.5" r="2.6" fill="#1c1c68"/>
<circle cx="598.5" cy="287.5" r="2.6" fill="#1c1c68"/>
<circle cx="717.5" cy="287.5" r="2.6" fill="#1c1c68"/>
<circle cx="598.5" cy="314.5" r="2.6" fill="#1c1c68"/>
<circle cx="486.5" cy="335.5" r="2.6" fill="#1c1c68"/>
<circle cx="639.5" cy="335.5" r="2.6" fill="#1c1c68"/>
<circle cx="763.5" cy="335.5" r="2.6" fill="#1c1c68"/>
<circle cx="763.5" cy="307.5" r="2.6" fill="#1c1c68"/>
<circle cx="763.5" cy="364.5" r="2.6" fill="#1c1c68"/>
<circle cx="959.5" cy="364.5" r="2.6" fill="#1c1c68"/>
<circle cx="598.5" cy="393.5" r="2.6" fill="#1c1c68"/>
<circle cx="620.5" cy="393.5" r="2.6" fill="#1c1c68"/>
<circle cx="721.5" cy="393.5" r="2.6" fill="#1c1c68"/>
<circle cx="486.5" cy="457.5" r="2.6" fill="#1c1c68"/>
<circle cx="598.5" cy="457.5" r="2.6" fill="#1c1c68"/>
<circle cx="763.5" cy="457.5" r="2.6" fill="#1c1c68"/>
<circle cx="903.5" cy="197.5" r="2.6" fill="#1c1c68"/>
<circle cx="963.5" cy="234.5" r="2.6" fill="#1c1c68"/>
<circle cx="1029.5" cy="234.5" r="2.6" fill="#1c1c68"/>
<circle cx="1104.5" cy="234.5" r="2.6" fill="#1c1c68"/>
<circle cx="1131.5" cy="234.5" r="2.6" fill="#1c1c68"/>
<circle cx="1118.5" cy="331.5" r="2.6" fill="#1c1c68"/>
<circle cx="763.5" cy="287.5" r="2.6" fill="#000"/>
<circle cx="763.5" cy="393.5" r="2.6" fill="#000"/>
<circle cx="400.5" cy="146.5" r="9.5" fill="#fff" stroke="#000" stroke-width="1.1"/><path d="M400.5 139V147M400.5 126V137M400.5 156V157" stroke="#000" stroke-width="1" fill="none"/><path d="M395 146.5H406L400.5 154z" fill="#1414e6"/>
<circle cx="598.5" cy="425.5" r="9.5" fill="#fff" stroke="#000" stroke-width="1.1"/><path d="M598.5 418V426M598.5 405V416M598.5 435V436" stroke="#000" stroke-width="1" fill="none"/><path d="M593 425.5H604L598.5 433z" fill="#1414e6"/>
<rect x="447.5" y="126.5" width="8" height="24" fill="#fff" stroke="#000"/>
<path d="M443.5 171.5H459.5M443.5 178.5H459.5" stroke="#000" stroke-width="1" fill="none"/>
<rect x="439.5" y="246.5" width="24" height="8" fill="#fff" stroke="#000"/>
<rect x="503.5" y="190.5" width="24" height="8" fill="#fff" stroke="#000"/>
<rect x="396.5" y="283.5" width="8" height="24" fill="#fff" stroke="#000"/>
<rect x="290.5" y="334.5" width="24" height="8" fill="#fff" stroke="#000"/>
<rect x="714.5" y="101.5" width="24" height="8" fill="#fff" stroke="#000"/>
<rect x="713.5" y="137.5" width="24" height="8" fill="#fff" stroke="#000"/>
<rect x="759.5" y="215.5" width="8" height="24" fill="#fff" stroke="#000"/>
<rect x="667.5" y="283.5" width="24" height="8" fill="#fff" stroke="#000"/>
<rect x="666.5" y="310.5" width="24" height="8" fill="#fff" stroke="#000"/>
<path d="M615.5 307.0V322.0M620.5 307.0V322.0" stroke="#000" stroke-width="1" fill="none"/>
<rect x="667.5" y="389.5" width="24" height="8" fill="#fff" stroke="#000"/>
<path d="M647.5 416.5V430.5M652.5 416.5V430.5" stroke="#000" stroke-width="1" fill="none"/>
<rect x="674.5" y="419.5" width="24" height="8" fill="#fff" stroke="#000"/>
<rect x="532.5" y="453.5" width="24" height="8" fill="#fff" stroke="#000"/>
<rect x="823.5" y="331.5" width="24" height="8" fill="#fff" stroke="#000"/>
<path d="M880.5 328.5V342.5M886.5 328.5V342.5" stroke="#000" stroke-width="1" fill="none"/>
<path d="M912.5 335.5a4.165 5.5 0 0 1 8.33 0a4.165 5.5 0 0 1 8.33 0a4.165 5.5 0 0 1 8.33 0" stroke="#000" fill="none"/>
<path d="M789 364.5a4.165 5.5 0 0 1 8.33 0a4.165 5.5 0 0 1 8.33 0a4.165 5.5 0 0 1 8.33 0" stroke="#000" fill="none"/>
<rect x="854.5" y="360.5" width="24" height="8" fill="#fff" stroke="#000"/>
<rect x="862.5" y="193.5" width="24" height="8" fill="#fff" stroke="#000"/>
<rect x="920.5" y="193.5" width="24" height="8" fill="#fff" stroke="#000"/>
<rect x="987.5" y="230.5" width="24" height="8" fill="#fff" stroke="#000"/>
<path d="M1062.5 195.5V209.5M1068.5 195.5V209.5" stroke="#000" stroke-width="1" fill="none"/>
<path d="M1052 234.5a4.165 5.5 0 0 1 8.33 0a4.165 5.5 0 0 1 8.33 0a4.165 5.5 0 0 1 8.33 0" stroke="#000" fill="none"/>
<rect x="1100.5" y="271.5" width="8" height="24" fill="#fff" stroke="#000"/>
<path d="M1131.5 256a6 4.0 0 0 0 0 8a6 4.0 0 0 0 0 8a6 4.0 0 0 0 0 8" stroke="#000" fill="none"/>
<path d="M1123.5 305.5H1139.5M1123.5 311.5H1139.5" stroke="#000" stroke-width="1" fill="none"/>
<path d="M262.5 389.5H280.5M266.5 393.5H276.5M269.5 397.5H273.5" stroke="#000" stroke-width="1" fill="none"/>
<path d="M950.5 386.5H968.5M954.5 390.5H964.5M957.5 394.5H961.5" stroke="#000" stroke-width="1" fill="none"/>
<path d="M1109.5 345.5H1127.5M1113.5 349.5H1123.5M1116.5 353.5H1120.5" stroke="#000" stroke-width="1" fill="none"/>
<path d="M848.5 188V206M844.5 192V202M840.5 195V199" stroke="#000" stroke-width="1" fill="none"/>
<path d="M917.5 220.5V249.5L941.5 234.5z" fill="#fff" stroke="#000"/>
<path d="M920 228.5h4" stroke="#000" stroke-width="1" fill="none"/>
<path d="M919.5 240.5h5M922 238v5" stroke="#a83232" fill="none"/>
<path d="M631.5 172.5H647.5M634.5 176.5H644.5M631.5 180.5H647.5M634.5 184.5H644.5M639.5 164V172M639.5 184V192M643.5 166.5h6M646.5 163.5v6" stroke="#000" stroke-width="1" fill="none"/>
<path d="M688.5 189.5H704.5M691.5 193.5H701.5M688.5 197.5H704.5M691.5 201.5H701.5M696.5 181V189M696.5 201V209M700.5 183.5h6M703.5 180.5v6" stroke="#000" stroke-width="1" fill="none"/>
<path d="M590.5 241.5H606.5M593.5 245.5H603.5M590.5 249.5H606.5M593.5 253.5H603.5M598.5 233V241M598.5 253V261M602.5 235.5h6M605.5 232.5v6" stroke="#000" stroke-width="1" fill="none"/>
<path d="M590.5 358.5H606.5M593.5 362.5H603.5M590.5 366.5H606.5M593.5 370.5H603.5M598.5 350V358M598.5 370V378M602.5 352.5h6M605.5 349.5v6" stroke="#000" stroke-width="1" fill="none"/>
<path d="M478.5 418.5H494.5M481.5 422.5H491.5M478.5 426.5H494.5M481.5 430.5H491.5M486.5 410V418M486.5 430V438M490.5 412.5h6M493.5 409.5v6" stroke="#000" stroke-width="1" fill="none"/>
<path d="M348.5 330V346M352.5 333V343M356.5 330V346M360.5 333V343M361 338.5H366" stroke="#000" stroke-width="1" fill="none"/>
<path d="M340 343.5h5M342.5 341v5" stroke="#000" stroke-width="1" fill="none"/>
<rect x="407" y="240" width="3" height="21" fill="#000"/>
<path d="M407 244.5L400.5 238M407 255.5L400.5 262" stroke="#000" stroke-width="1" fill="none"/>
<path d="M400 262.5l2.5-6 3.5 3.5z" fill="#000"/>
<rect x="390.5" y="328" width="3" height="21" fill="#000"/>
<path d="M393.5 332L400.5 326.5M393.5 344L400.5 350" stroke="#000" stroke-width="1" fill="none"/>
<path d="M393.5 332.5l2.5-5.5 3 4z" fill="#000"/>
<rect x="589" y="184" width="3" height="21" fill="#000"/>
<path d="M592 188.5L598.5 182.5M592 199.5L598.5 206.5" stroke="#000" stroke-width="1" fill="none"/>
<path d="M598.5 206.5l-6-2.5 3.5-3.5z" fill="#000"/>
<path d="M749.5 269V288M753.5 267V273M753.5 276V282M753.5 285V291M753.5 269.5H763.5V261M754 279.5H763.5V287" stroke="#000" stroke-width="1" fill="none"/>
<path d="M755 279.5l5-3.5v7z" fill="#000"/>
<path d="M749.5 393V412M753.5 390V396M753.5 399V405M753.5 408V414M753.5 393.5H763.5M754 402.5H763.5V393M753.5 411.5H763.5V420" stroke="#000" stroke-width="1" fill="none"/>
<path d="M762 402.5l-5-3.5v7z" fill="#000"/>
<circle cx="797.5" cy="105.5" r="3" fill="#fff" stroke="#000"/>
<circle cx="791.5" cy="457.5" r="3" fill="#fff" stroke="#000"/>
<rect x="200.5" y="323.5" width="49" height="39" fill="#fff" stroke="#1c1c68" stroke-width="1.2"/>
<path d="M207 339.5h6C213 332 215 327.5 219 327.5S224 334 225 339.5S228 350.5 231 350.5S237 346 237 339.5h6" stroke="#1c1c68" fill="none"/>
<path d="M348 338.5H340" stroke="#000" stroke-width="1" fill="none"/>
<text x="361" y="147.6" font-family="Liberation Mono" font-size="11.3" fill="#333333" >3mA</text>
<text x="462" y="133.1" font-family="Liberation Mono" font-size="11.3" fill="#333333" >R3</text>
<text x="462" y="144.1" font-family="Liberation Mono" font-size="11.3" fill="#333333" >33</text>
<text x="465" y="167.6" font-family="Liberation Mono" font-size="11.3" fill="#333333" >C4</text>
<text x="465" y="178.1" font-family="Liberation Mono" font-size="11.3" fill="#333333" >1n</text>
<text x="356" y="252.1" font-family="Liberation Mono" font-size="11.3" fill="#333333" >BC547C</text>
<text x="544" y="185.8" font-family="Liberation Mono" font-size="11.3" fill="#333333" >BC547C</text>
<text x="770" y="284.6" font-family="Liberation Mono" font-size="11.3" fill="#333333" >2SK1058</text>
<text x="771" y="409.4" font-family="Liberation Mono" font-size="11.3" fill="#333333" >2SJ162</text>
<text x="402" y="339.6" font-family="Liberation Mono" font-size="11.3" fill="#333333" >BC557C</text>
<text x="654" y="173.6" font-family="Liberation Mono" font-size="11.3" fill="#333333" >V6</text>
<text x="652" y="183.6" font-family="Liberation Mono" font-size="11.3" fill="#333333" >25</text>
<text x="710.5" y="190.6" font-family="Liberation Mono" font-size="11.3" fill="#333333" >V7</text>
<text x="710.5" y="199.6" font-family="Liberation Mono" font-size="11.3" fill="#333333" >15</text>
<text x="570" y="239.8" font-family="Liberation Mono" font-size="11.3" fill="#333333" >V2</text>
<text x="566.5" y="250.6" font-family="Liberation Mono" font-size="11.3" fill="#333333" >3.6</text>
<text x="569" y="356.3" font-family="Liberation Mono" font-size="11.3" fill="#333333" >V3</text>
<text x="566" y="366.6" font-family="Liberation Mono" font-size="11.3" fill="#333333" >1.4</text>
<text x="498" y="426.6" font-family="Liberation Mono" font-size="11.3" fill="#333333" >5</text>
<text x="771" y="229.1" font-family="Liberation Mono" font-size="11.3" fill="#333333" >1u</text>
<text x="604" y="303.1" font-family="Liberation Mono" font-size="11.3" fill="#333333" >100p</text>
<text x="559" y="428.1" font-family="Liberation Mono" font-size="11.3" fill="#333333" >4mA</text>
<text x="781" y="449.6" font-family="Liberation Mono" font-size="11.3" fill="#333333" >-33V</text>
<text x="809.5" y="108.1" font-family="Liberation Mono" font-size="11.3" fill="#333333" >33V</text>
<text x="410" y="292.1" font-family="Liberation Mono" font-size="11.3" fill="#333333" >R2</text>
<text x="410" y="303.6" font-family="Liberation Mono" font-size="11.3" fill="#333333" >10</text>
<text x="415" y="327.6" font-family="Liberation Mono" font-size="11.3" fill="#333333" >Q1</text>
<text x="336" y="357.6" font-family="Liberation Mono" font-size="11.3" fill="#333333" >1.401</text>
<text x="201" y="319.6" font-family="Liberation Mono" font-size="11.3" fill="#333333" >-20/20V</text>
<text x="208.5" y="359.6" font-family="Liberation Mono" font-size="11.3" fill="#333333" >10kHz</text>
<text x="789" y="353.6" font-family="Liberation Mono" font-size="11.3" fill="#333333" >400n</text>
<text x="1044" y="190.9" font-family="Liberation Mono" font-size="11.3" fill="#333333" >26.53n</text>
<text x="1047" y="223.8" font-family="Liberation Mono" font-size="11.3" fill="#333333" >9.55m</text>
<text x="1075" y="286.6" font-family="Liberation Mono" font-size="11.3" fill="#333333" >600</text>
<text x="1139" y="269.6" font-family="Liberation Mono" font-size="11.3" fill="#333333" >9.55m</text>
<text x="1143.5" y="309.6" font-family="Liberation Mono" font-size="11.3" fill="#333333" >26.53n</text>
<text x="377" y="239.1" font-family="Liberation Mono" font-size="11.3" fill="#333333" text-anchor="middle" >Q2</text>
<text x="451" y="232.1" font-family="Liberation Mono" font-size="11.3" fill="#333333" text-anchor="middle" >R4</text>
<text x="451" y="242.1" font-family="Liberation Mono" font-size="11.3" fill="#333333" text-anchor="middle" >10</text>
<text x="515" y="183.6" font-family="Liberation Mono" font-size="11.3" fill="#333333" text-anchor="middle" >R12</text>
<text x="515" y="210.6" font-family="Liberation Mono" font-size="11.3" fill="#333333" text-anchor="middle" >22</text>
<text x="564" y="173.1" font-family="Liberation Mono" font-size="11.3" fill="#333333" text-anchor="middle" >Q3</text>
<text x="726" y="98.1" font-family="Liberation Mono" font-size="11.3" fill="#333333" text-anchor="middle" >1.2k</text>
<text x="726" y="120.6" font-family="Liberation Mono" font-size="11.3" fill="#333333" text-anchor="middle" >R6</text>
<text x="725" y="133.9" font-family="Liberation Mono" font-size="11.3" fill="#333333" text-anchor="middle" >3.3k</text>
<text x="725" y="155.6" font-family="Liberation Mono" font-size="11.3" fill="#333333" text-anchor="middle" >R18</text>
<text x="679" y="268.1" font-family="Liberation Mono" font-size="11.3" fill="#333333" text-anchor="middle" >R14</text>
<text x="679" y="279.1" font-family="Liberation Mono" font-size="11.3" fill="#333333" text-anchor="middle" >470</text>
<text x="792" y="270.1" font-family="Liberation Mono" font-size="11.3" fill="#333333" text-anchor="middle" >Q4</text>
<text x="616" y="331.4" font-family="Liberation Mono" font-size="11.3" fill="#333333" text-anchor="middle" >C1</text>
<text x="678" y="306.4" font-family="Liberation Mono" font-size="11.3" fill="#333333" text-anchor="middle" >100</text>
<text x="678" y="328.6" font-family="Liberation Mono" font-size="11.3" fill="#333333" text-anchor="middle" >R8</text>
<text x="835" y="316.9" font-family="Liberation Mono" font-size="11.3" fill="#333333" text-anchor="middle" >R1</text>
<text x="835" y="327.6" font-family="Liberation Mono" font-size="11.3" fill="#333333" text-anchor="middle" >10</text>
<text x="883" y="313.1" font-family="Liberation Mono" font-size="11.3" fill="#333333" text-anchor="middle" >C7</text>
<text x="883" y="324.4" font-family="Liberation Mono" font-size="11.3" fill="#333333" text-anchor="middle" >47n</text>
<text x="924" y="312.4" font-family="Liberation Mono" font-size="11.3" fill="#333333" text-anchor="middle" >L4</text>
<text x="924" y="324.1" font-family="Liberation Mono" font-size="11.3" fill="#333333" text-anchor="middle" >10n</text>
<text x="801" y="374.4" font-family="Liberation Mono" font-size="11.3" fill="#333333" text-anchor="middle" >L2</text>
<text x="866" y="356.4" font-family="Liberation Mono" font-size="11.3" fill="#333333" text-anchor="middle" >8</text>
<text x="866" y="380.6" font-family="Liberation Mono" font-size="11.3" fill="#333333" text-anchor="middle" >R22</text>
<text x="679" y="374.4" font-family="Liberation Mono" font-size="11.3" fill="#333333" text-anchor="middle" >R15</text>
<text x="679" y="385.6" font-family="Liberation Mono" font-size="11.3" fill="#333333" text-anchor="middle" >75</text>
<text x="787" y="394.6" font-family="Liberation Mono" font-size="11.3" fill="#333333" text-anchor="middle" >Q5</text>
<text x="649.5" y="411.9" font-family="Liberation Mono" font-size="11.3" fill="#333333" text-anchor="middle" >47p</text>
<text x="649.5" y="440.1" font-family="Liberation Mono" font-size="11.3" fill="#333333" text-anchor="middle" >C2</text>
<text x="686" y="415.6" font-family="Liberation Mono" font-size="11.3" fill="#333333" text-anchor="middle" >51</text>
<text x="686" y="437.6" font-family="Liberation Mono" font-size="11.3" fill="#333333" text-anchor="middle" >R10</text>
<text x="544" y="438.1" font-family="Liberation Mono" font-size="11.3" fill="#333333" text-anchor="middle" >R5</text>
<text x="544" y="450.1" font-family="Liberation Mono" font-size="11.3" fill="#333333" text-anchor="middle" >8.2k</text>
<text x="353.5" y="324.9" font-family="Liberation Mono" font-size="11.3" fill="#333333" text-anchor="middle" >V4</text>
<text x="302" y="318.1" font-family="Liberation Mono" font-size="11.3" fill="#333333" text-anchor="middle" >R9</text>
<text x="302" y="330.6" font-family="Liberation Mono" font-size="11.3" fill="#333333" text-anchor="middle" >400</text>
<text x="874" y="189.4" font-family="Liberation Mono" font-size="11.3" fill="#333333" text-anchor="middle" >1k</text>
<text x="932" y="189.1" font-family="Liberation Mono" font-size="11.3" fill="#333333" text-anchor="middle" >1k</text>
<text x="1000" y="226.9" font-family="Liberation Mono" font-size="11.3" fill="#333333" text-anchor="middle" >600</text>
<text x="767.5" y="324.1" font-family="Liberation Mono" font-size="11.3" fill="#a83232" >ki</text>
<text x="1134" y="213.6" font-family="Liberation Mono" font-size="11.3" fill="#a83232" >nocht</text>
<text x="333.5" y="333.1" font-family="Liberation Mono" font-size="11.3" fill="#a83232" text-anchor="middle" >b</text>
<text x="267.8" y="333.2" font-family="Liberation Mono" font-size="11.3" fill="#a83232" text-anchor="middle" >a</text>
<rect x="657.5" y="282.5" width="10" height="10" fill="#30c030"/><rect x="659" y="284" width="7" height="7" fill="#e8f8e8"/>
<text x="662.5" y="291" font-family="Liberation Sans" font-size="9" fill="#000" text-anchor="middle" >A</text>
<rect x="657.5" y="388" width="11" height="11" fill="#f0e040"/>
<text x="663" y="397" font-family="Liberation Sans" font-size="9" fill="#000" text-anchor="middle" >B</text>
</g>
<defs>
<pattern id="dith" width="2" height="2" patternUnits="userSpaceOnUse"><rect width="2" height="2" fill="#f4f3ec"/><rect width="1" height="1" fill="#fff"/><rect x="1" y="1" width="1" height="1" fill="#fff"/></pattern>
<linearGradient id="task" x1="0" y1="0" x2="0" y2="1"><stop offset="0" stop-color="#2258d8"/><stop offset="0.5" stop-color="#2456d4"/><stop offset="0.88" stop-color="#2460dc"/><stop offset="0.95" stop-color="#1e4cb8"/><stop offset="1" stop-color="#1a44a8"/></linearGradient>
<linearGradient id="start" x1="0" y1="0" x2="0" y2="1"><stop offset="0" stop-color="#5eb45e"/><stop offset="0.2" stop-color="#3c9a3c"/><stop offset="0.6" stop-color="#37993a"/><stop offset="1" stop-color="#2c7c2c"/></linearGradient>
<linearGradient id="tray" x1="0" y1="0" x2="0" y2="1"><stop offset="0" stop-color="#1da0f2"/><stop offset="0.15" stop-color="#1290e8"/><stop offset="0.85" stop-color="#108ae4"/><stop offset="1" stop-color="#0c6fc8"/></linearGradient>
<linearGradient id="tbtn2" x1="0" y1="0" x2="0" y2="1"><stop offset="0" stop-color="#4d90fa"/><stop offset="1" stop-color="#3a7df0"/></linearGradient>
</defs>
<rect x="176" y="511" width="1102" height="421" fill="#000000" />
<rect x="176" y="932" width="1102" height="17" fill="url(#dith)" />
<rect x="176" y="932" width="17" height="17" fill="#ece9d8" /><rect x="176" y="932" width="17" height="1" fill="#f5f4ee"/><rect x="176" y="932" width="1" height="17" fill="#f5f4ee"/><rect x="177" y="933" width="15" height="1" fill="#fff"/><rect x="177" y="933" width="1" height="15" fill="#fff"/><rect x="176" y="948" width="17" height="1" fill="#716f64"/><rect x="192" y="932" width="1" height="17" fill="#716f64"/><rect x="177" y="947" width="15" height="1" fill="#aca899"/><rect x="191" y="933" width="1" height="15" fill="#aca899"/>
<path d="M181 940.5l4-4v8z" fill="#000"/>
<rect x="1245" y="932" width="16" height="17" fill="#ece9d8" /><rect x="1245" y="932" width="16" height="1" fill="#f5f4ee"/><rect x="1245" y="932" width="1" height="17" fill="#f5f4ee"/><rect x="1246" y="933" width="14" height="1" fill="#fff"/><rect x="1246" y="933" width="1" height="15" fill="#fff"/><rect x="1245" y="948" width="16" height="1" fill="#716f64"/><rect x="1260" y="932" width="1" height="17" fill="#716f64"/><rect x="1246" y="947" width="14" height="1" fill="#aca899"/><rect x="1259" y="933" width="1" height="15" fill="#aca899"/>
<rect x="1261" y="932" width="17" height="17" fill="#ece9d8" /><rect x="1261" y="932" width="17" height="1" fill="#f5f4ee"/><rect x="1261" y="932" width="1" height="17" fill="#f5f4ee"/><rect x="1262" y="933" width="15" height="1" fill="#fff"/><rect x="1262" y="933" width="1" height="15" fill="#fff"/><rect x="1261" y="948" width="17" height="1" fill="#716f64"/><rect x="1277" y="932" width="1" height="17" fill="#716f64"/><rect x="1262" y="947" width="15" height="1" fill="#aca899"/><rect x="1276" y="933" width="1" height="15" fill="#aca899"/>
<path d="M1272 940.5l-4-4v8z" fill="#000"/>
<rect x="176" y="949" width="1102" height="24" fill="#ece9d8" />
<rect x="176" y="955" width="1102" height="1" fill="#000"/>
<path d="M250.5 955.5l3 14.5h88l4.5-14.5" fill="#ece9d8" stroke="#000" stroke-width="1"/>
<path d="M185 955.5l4.5 14.5h59l2.5-14.5z" fill="#fff" stroke="#000" stroke-width="1"/>
<rect x="189" y="955" width="61" height="1" fill="#aaa"/>
<text x="190" y="967" font-family="Liberation Sans" font-size="11" fill="#000" textLength="55" lengthAdjust="spacingAndGlyphs" >AC Analysis</text>
<text x="255.5" y="967" font-family="Liberation Sans" font-size="11" fill="#000" textLength="84" lengthAdjust="spacingAndGlyphs" >Transient Analysis</text>
<rect x="175" y="509" width="1" height="464" fill="#716f64"/>
<rect x="0" y="974" width="1280" height="20" fill="#ece9d8" />
<rect x="0" y="977" width="1280" height="1" fill="#c5c2b2"/>
<rect x="0" y="978" width="1280" height="1" fill="#fff"/>
<rect x="50" y="978" width="1" height="15" fill="#c5c2b2"/>
<rect x="51" y="978" width="1" height="15" fill="#fff"/>
<rect x="0" y="994" width="1280" height="30" fill="url(#task)" />
<rect x="0" y="993" width="1280" height="1" fill="#ffffff"/>
<rect x="0" y="994" width="1280" height="1" fill="#2c5cb0"/>
<rect x="0" y="995" width="1280" height="3" fill="#4596ec" />
<rect x="0" y="998" width="1280" height="1" fill="#2a70dd"/>
<path d="M0 994h88q10 0 10 15q0 15 -10 15h-88z" fill="url(#start)"/>
<path d="M88 994q10 0 10 15q0 15 -10 15" fill="none" stroke="#2a6a2a" stroke-width="1"/>
<g transform="translate(11,1000) skewY(-4)"><rect x="0" y="1" width="8" height="7" fill="#f05a28" rx="1"/><rect x="9" y="1" width="8" height="7" fill="#7ab800" rx="1"/><rect x="0" y="9" width="8" height="7" fill="#2a8ce8" rx="1"/><rect x="9" y="9" width="8" height="7" fill="#fcb800" rx="1"/></g>
<text x="35" y="1015" font-family="Liberation Sans" font-size="17" fill="#ffffff" font-weight="bold" font-style="italic" textLength="40" lengthAdjust="spacingAndGlyphs" style="text-shadow:1px 1px 1px #1a4a1a">Start</text>
<rect x="108.5" y="997.5" width="159" height="24" rx="2" fill="#1e4fc2" stroke="#1840a8"/>
<rect x="269.5" y="997.5" width="157" height="24" rx="2" fill="url(#tbtn2)" stroke="#2a64d8"/>
<g transform="translate(119,1002)"><rect x="0" y="0" width="16" height="16" fill="#f6eef4"/><rect x="0.5" y="0.5" width="15" height="15" fill="none" stroke="#d8b0d0"/><path d="M2 5.5h8M4.5 5.5v7M7.5 5.5v5" stroke="#444" fill="none"/><circle cx="12" cy="6" r="2.3" fill="#d42828"/><circle cx="12" cy="11" r="2.3" fill="#1a2ab0"/><path d="M5 13q2 1 4 -1" stroke="#30a030" stroke-width="2" fill="none"/></g>
<text x="139" y="1013" font-family="Liberation Sans" font-size="11" fill="#fff" textLength="58" lengthAdjust="spacingAndGlyphs" >CircuitMaker</text>
<g transform="translate(278,1001)"><rect x="0" y="0" width="15" height="16" fill="#1a2060"/><rect x="3" y="1" width="9" height="5" fill="#e8e8f0"/><rect x="2" y="8" width="11" height="2" fill="#e8e8f0"/><rect x="2" y="11" width="11" height="2" fill="#d02828"/><rect x="2" y="13.5" width="11" height="1.5" fill="#e8e8f0"/></g>
<text x="298" y="1013" font-family="Liberation Sans" font-size="11" fill="#fff" textLength="114" lengthAdjust="spacingAndGlyphs" >Total Commander 6.5...</text>
<rect x="1134" y="994" width="146" height="30" fill="url(#tray)"/>
<rect x="1133" y="994" width="1" height="30" fill="#0f5bc0"/>
<text x="1098" y="1013" font-family="Liberation Sans" font-size="11" fill="#fff" textLength="14.5" lengthAdjust="spacingAndGlyphs" >HU</text>
<path d="M1146 1014l10-10M1148 1016l9-9" stroke="#30a040" stroke-width="1.6"/><path d="M1145 1016l9-9" stroke="#e04020" stroke-width="1.4"/><path d="M1145 1017h12" stroke="#222" stroke-width="1.2"/>
<path d="M1164 1003l5-2 5 2v5q0 6-5 9q-5-3-5-9z" fill="#d02828" stroke="#fff" stroke-width="0.8"/><path d="M1167 1006l4 4M1171 1006l-4 4" stroke="#fff" stroke-width="1.4"/>
<path d="M1181 1006h3l5-4v14l-5-4h-3z" fill="#f08a30"/><path d="M1191 1005q2 4 0 8M1193 1003q3 6 0 12" stroke="#222" fill="none" stroke-width="1"/>
<circle cx="1207" cy="1008" r="5" fill="#a8b0b8"/><circle cx="1206" cy="1007" r="2.5" fill="#e0e8f0"/><path d="M1209 1013l4 3" stroke="#ddd" stroke-width="1.5"/>
<ellipse cx="1224" cy="1009" rx="5.5" ry="8" fill="#1838a8"/><path d="M1221.5 1005l5 7-2.5 2v-10l2.5 2-5 7" stroke="#d02828" stroke-width="1" fill="none"/>
<text x="1241" y="1013" font-family="Liberation Sans" font-size="11" fill="#fff" textLength="22.5" lengthAdjust="spacingAndGlyphs" >6:27</text>
<defs><clipPath id="plotclip"><rect x="304" y="526" width="928" height="380"/></clipPath></defs>
<path d="M304.5 531V909M407.5 531V909M510.5 531V909M613.5 531V909M716.5 531V909M819.5 531V909M922.5 531V909M1025.5 531V909M1128.5 531V909M1231.5 531V909M304 531.5H1232M304 578.5H1232M304 624.5H1232M304 671.5H1232M304 717.5H1232M304 763.5H1232M304 810.5H1232M304 856.5H1232M304 903.5H1232M304 540.5H311M304 549.5H311M304 558.5H311M304 568.5H311M304 586.5H311M304 596.5H311M304 605.5H311M304 614.5H311M304 633.5H311M304 642.5H311M304 651.5H311M304 661.5H311M304 679.5H311M304 689.5H311M304 698.5H311M304 707.5H311M304 726.5H311M304 735.5H311M304 744.5H311M304 754.5H311M304 772.5H311M304 782.5H311M304 791.5H311M304 800.5H311M304 819.5H311M304 828.5H311M304 837.5H311M304 847.5H311M304 865.5H311M304 875.5H311M304 884.5H311M304 893.5H311M324.5 896V903M345.5 896V903M365.5 896V903M386.5 896V903M427.5 896V903M448.5 896V903M468.5 896V903M489.5 896V903M530.5 896V903M551.5 896V903M571.5 896V903M592.5 896V903M633.5 896V903M654.5 896V903M674.5 896V903M695.5 896V903M736.5 896V903M757.5 896V903M777.5 896V903M798.5 896V903M839.5 896V903M860.5 896V903M880.5 896V903M901.5 896V903M942.5 896V903M963.5 896V903M983.5 896V903M1004.5 896V903M1045.5 896V903M1066.5 896V903M1086.5 896V903M1107.5 896V903M1148.5 896V903M1169.5 896V903M1189.5 896V903M1210.5 896V903" stroke="#c4c4c4" stroke-width="1" fill="none"/>
<text x="297.5" y="535.5" font-family="Liberation Sans" font-size="11" fill="#e6e6e6" text-anchor="end" >200.0uA</text>
<text x="297.5" y="582.5" font-family="Liberation Sans" font-size="11" fill="#e6e6e6" text-anchor="end" >150.0uA</text>
<text x="297.5" y="628.5" font-family="Liberation Sans" font-size="11" fill="#e6e6e6" text-anchor="end" >100.0uA</text>
<text x="297.5" y="675.5" font-family="Liberation Sans" font-size="11" fill="#e6e6e6" text-anchor="end" >50.00uA</text>
<text x="297.5" y="721.5" font-family="Liberation Sans" font-size="11" fill="#e6e6e6" text-anchor="end" >0.000uA</text>
<text x="297.5" y="767.5" font-family="Liberation Sans" font-size="11" fill="#e6e6e6" text-anchor="end" >-50.00uA</text>
<text x="297.5" y="814.5" font-family="Liberation Sans" font-size="11" fill="#e6e6e6" text-anchor="end" >-100.0uA</text>
<text x="297.5" y="860.5" font-family="Liberation Sans" font-size="11" fill="#e6e6e6" text-anchor="end" >-150.0uA</text>
<text x="297.5" y="907.5" font-family="Liberation Sans" font-size="11" fill="#e6e6e6" text-anchor="end" >-200.0uA</text>
<text x="305.5" y="920" font-family="Liberation Sans" font-size="11" fill="#e6e6e6" text-anchor="middle" >1.375ms</text>
<text x="408.5" y="920" font-family="Liberation Sans" font-size="11" fill="#e6e6e6" text-anchor="middle" >1.400ms</text>
<text x="511.5" y="920" font-family="Liberation Sans" font-size="11" fill="#e6e6e6" text-anchor="middle" >1.425ms</text>
<text x="614.5" y="920" font-family="Liberation Sans" font-size="11" fill="#e6e6e6" text-anchor="middle" >1.450ms</text>
<text x="717.5" y="920" font-family="Liberation Sans" font-size="11" fill="#e6e6e6" text-anchor="middle" >1.475ms</text>
<text x="820.5" y="920" font-family="Liberation Sans" font-size="11" fill="#e6e6e6" text-anchor="middle" >1.500ms</text>
<text x="923.5" y="920" font-family="Liberation Sans" font-size="11" fill="#e6e6e6" text-anchor="middle" >1.525ms</text>
<text x="1026.5" y="920" font-family="Liberation Sans" font-size="11" fill="#e6e6e6" text-anchor="middle" >1.550ms</text>
<text x="1129.5" y="920" font-family="Liberation Sans" font-size="11" fill="#e6e6e6" text-anchor="middle" >1.575ms</text>
<text x="1232.5" y="920" font-family="Liberation Sans" font-size="11" fill="#e6e6e6" text-anchor="middle" >1.600ms</text>
<text x="1261" y="920" font-family="Liberation Sans" font-size="11" fill="#e6e6e6" >ıs</text>
<text x="186.5" y="542.5" font-family="Liberation Sans" font-size="11" fill="#38d838" textLength="37.5" lengthAdjust="spacingAndGlyphs" >A: r14[i]</text>
<text x="186.5" y="558" font-family="Liberation Sans" font-size="11" fill="#e8e850" textLength="36.5" lengthAdjust="spacingAndGlyphs" >B: r15[i]</text>
<g clip-path="url(#plotclip)"><path d="M-5.90 717.50C1.75 709.75 26.67 684.67 40.00 671.00C53.33 657.33 68.42 641.42 74.10 635.50M74.10 635.50C75.08 636.28 78.20 638.65 80.00 640.20C81.80 641.75 83.27 643.68 84.90 644.80C86.53 645.92 87.52 646.52 89.80 646.90C92.08 647.28 95.90 647.38 98.60 647.10C101.30 646.82 103.83 646.05 106.00 645.20C108.17 644.35 109.95 643.30 111.60 642.00C113.25 640.70 114.53 639.40 115.90 637.40C117.27 635.40 119.15 631.23 119.80 630.00M119.80 630.00C127.30 636.83 151.20 656.43 164.80 671.00C178.40 685.57 189.50 702.00 201.40 717.40C213.30 732.80 223.37 749.20 236.20 763.40C249.03 777.60 271.37 796.07 278.40 802.60M278.40 802.60C279.25 801.15 281.17 796.48 283.50 793.90C285.83 791.32 288.87 788.58 292.40 787.10C295.93 785.62 300.83 784.88 304.70 785.00C308.57 785.12 312.63 786.42 315.60 787.80C318.57 789.18 320.68 791.63 322.50 793.30C324.32 794.97 325.83 797.05 326.50 797.80M326.50 797.80C332.45 792.08 348.95 776.93 362.20 763.50C375.45 750.07 398.70 724.92 406.00 717.20M405.90 717.50C413.55 709.75 438.47 684.67 451.80 671.00C465.13 657.33 480.22 641.42 485.90 635.50M485.90 635.50C486.88 636.28 490.00 638.65 491.80 640.20C493.60 641.75 495.07 643.68 496.70 644.80C498.33 645.92 499.32 646.52 501.60 646.90C503.88 647.28 507.70 647.38 510.40 647.10C513.10 646.82 515.63 646.05 517.80 645.20C519.97 644.35 521.75 643.30 523.40 642.00C525.05 640.70 526.33 639.40 527.70 637.40C529.07 635.40 530.95 631.23 531.60 630.00M531.60 630.00C539.10 636.83 563.00 656.43 576.60 671.00C590.20 685.57 601.30 702.00 613.20 717.40C625.10 732.80 635.17 749.20 648.00 763.40C660.83 777.60 683.17 796.07 690.20 802.60M690.20 802.60C691.05 801.15 692.97 796.48 695.30 793.90C697.63 791.32 700.67 788.58 704.20 787.10C707.73 785.62 712.63 784.88 716.50 785.00C720.37 785.12 724.43 786.42 727.40 787.80C730.37 789.18 732.48 791.63 734.30 793.30C736.12 794.97 737.63 797.05 738.30 797.80M738.30 797.80C744.25 792.08 760.75 776.93 774.00 763.50C787.25 750.07 810.50 724.92 817.80 717.20M817.70 717.50C825.35 709.75 850.27 684.67 863.60 671.00C876.93 657.33 892.02 641.42 897.70 635.50M897.70 635.50C898.68 636.28 901.80 638.65 903.60 640.20C905.40 641.75 906.87 643.68 908.50 644.80C910.13 645.92 911.12 646.52 913.40 646.90C915.68 647.28 919.50 647.38 922.20 647.10C924.90 646.82 927.43 646.05 929.60 645.20C931.77 644.35 933.55 643.30 935.20 642.00C936.85 640.70 938.13 639.40 939.50 637.40C940.87 635.40 942.75 631.23 943.40 630.00M943.40 630.00C950.90 636.83 974.80 656.43 988.40 671.00C1002.00 685.57 1013.10 702.00 1025.00 717.40C1036.90 732.80 1046.97 749.20 1059.80 763.40C1072.63 777.60 1094.97 796.07 1102.00 802.60M1102.00 802.60C1102.85 801.15 1104.77 796.48 1107.10 793.90C1109.43 791.32 1112.47 788.58 1116.00 787.10C1119.53 785.62 1124.43 784.88 1128.30 785.00C1132.17 785.12 1136.23 786.42 1139.20 787.80C1142.17 789.18 1144.28 791.63 1146.10 793.30C1147.92 794.97 1149.43 797.05 1150.10 797.80M1150.10 797.80C1156.05 792.08 1172.55 776.93 1185.80 763.50C1199.05 750.07 1222.30 724.92 1229.60 717.20" stroke="#3ce63c" stroke-width="2.6" fill="none" stroke-linejoin="round"/>
<path d="M-5.90 717.50C-3.30 709.75 4.17 686.47 9.70 671.00C15.23 655.53 20.47 640.17 27.30 624.70C34.13 609.23 42.90 593.00 50.70 578.20C58.50 563.40 70.20 542.95 74.10 535.90M74.10 535.90C75.12 538.25 78.52 546.19 80.20 550.00C81.88 553.81 82.53 556.04 84.20 558.75C85.87 561.46 87.55 564.54 90.20 566.25C92.85 567.96 97.10 569.04 100.10 569.00C103.10 568.96 106.18 567.29 108.20 566.00C110.22 564.71 110.87 563.58 112.20 561.25C113.53 558.92 115.08 555.46 116.20 552.00C117.32 548.54 118.45 542.42 118.90 540.50M118.90 540.50C121.52 546.78 128.73 564.17 134.60 578.20C140.47 592.23 146.95 609.23 154.10 624.70C161.25 640.17 169.78 655.53 177.50 671.00C185.22 686.47 193.53 702.10 200.40 717.50C207.27 732.90 212.02 747.93 218.70 763.40C225.38 778.87 232.82 794.80 240.50 810.30C248.18 825.80 258.47 843.62 264.80 856.40C271.13 869.18 276.22 881.90 278.50 887.00M278.50 887.00C278.95 885.07 279.95 878.63 281.20 875.40C282.45 872.17 284.38 869.63 286.00 867.60C287.62 865.57 288.93 864.18 290.90 863.20C292.87 862.22 295.52 861.75 297.80 861.70C300.08 861.65 302.33 862.00 304.60 862.90C306.87 863.80 309.37 865.50 311.40 867.10C313.43 868.70 315.25 870.55 316.80 872.50C318.35 874.45 319.48 876.03 320.70 878.80C321.92 881.57 323.20 886.50 324.10 889.10C325.00 891.70 325.77 893.52 326.10 894.40M326.10 894.40C330.15 888.04 342.77 870.25 350.40 856.25C358.03 842.25 365.22 825.86 371.90 810.40C378.58 794.94 384.83 779.03 390.50 763.50C396.17 747.97 403.33 724.92 405.90 717.20M405.90 717.50C408.50 709.75 415.97 686.47 421.50 671.00C427.03 655.53 432.27 640.17 439.10 624.70C445.93 609.23 454.70 593.00 462.50 578.20C470.30 563.40 482.00 542.95 485.90 535.90M485.90 535.90C486.92 538.25 490.32 546.19 492.00 550.00C493.68 553.81 494.33 556.04 496.00 558.75C497.67 561.46 499.35 564.54 502.00 566.25C504.65 567.96 508.90 569.04 511.90 569.00C514.90 568.96 517.98 567.29 520.00 566.00C522.02 564.71 522.67 563.58 524.00 561.25C525.33 558.92 526.88 555.46 528.00 552.00C529.12 548.54 530.25 542.42 530.70 540.50M530.70 540.50C533.32 546.78 540.53 564.17 546.40 578.20C552.27 592.23 558.75 609.23 565.90 624.70C573.05 640.17 581.58 655.53 589.30 671.00C597.02 686.47 605.33 702.10 612.20 717.50C619.07 732.90 623.82 747.93 630.50 763.40C637.18 778.87 644.62 794.80 652.30 810.30C659.98 825.80 670.27 843.62 676.60 856.40C682.93 869.18 688.02 881.90 690.30 887.00M690.30 887.00C690.75 885.07 691.75 878.63 693.00 875.40C694.25 872.17 696.18 869.63 697.80 867.60C699.42 865.57 700.73 864.18 702.70 863.20C704.67 862.22 707.32 861.75 709.60 861.70C711.88 861.65 714.13 862.00 716.40 862.90C718.67 863.80 721.17 865.50 723.20 867.10C725.23 868.70 727.05 870.55 728.60 872.50C730.15 874.45 731.28 876.03 732.50 878.80C733.72 881.57 735.00 886.50 735.90 889.10C736.80 891.70 737.57 893.52 737.90 894.40M737.90 894.40C741.95 888.04 754.57 870.25 762.20 856.25C769.83 842.25 777.02 825.86 783.70 810.40C790.38 794.94 796.63 779.03 802.30 763.50C807.97 747.97 815.13 724.92 817.70 717.20M817.70 717.50C820.30 709.75 827.77 686.47 833.30 671.00C838.83 655.53 844.07 640.17 850.90 624.70C857.73 609.23 866.50 593.00 874.30 578.20C882.10 563.40 893.80 542.95 897.70 535.90M897.70 535.90C898.72 538.25 902.12 546.19 903.80 550.00C905.48 553.81 906.13 556.04 907.80 558.75C909.47 561.46 911.15 564.54 913.80 566.25C916.45 567.96 920.70 569.04 923.70 569.00C926.70 568.96 929.78 567.29 931.80 566.00C933.82 564.71 934.47 563.58 935.80 561.25C937.13 558.92 938.68 555.46 939.80 552.00C940.92 548.54 942.05 542.42 942.50 540.50M942.50 540.50C945.12 546.78 952.33 564.17 958.20 578.20C964.07 592.23 970.55 609.23 977.70 624.70C984.85 640.17 993.38 655.53 1001.10 671.00C1008.82 686.47 1017.13 702.10 1024.00 717.50C1030.87 732.90 1035.62 747.93 1042.30 763.40C1048.98 778.87 1056.42 794.80 1064.10 810.30C1071.78 825.80 1082.07 843.62 1088.40 856.40C1094.73 869.18 1099.82 881.90 1102.10 887.00M1102.10 887.00C1102.55 885.07 1103.55 878.63 1104.80 875.40C1106.05 872.17 1107.98 869.63 1109.60 867.60C1111.22 865.57 1112.53 864.18 1114.50 863.20C1116.47 862.22 1119.12 861.75 1121.40 861.70C1123.68 861.65 1125.93 862.00 1128.20 862.90C1130.47 863.80 1132.97 865.50 1135.00 867.10C1137.03 868.70 1138.85 870.55 1140.40 872.50C1141.95 874.45 1143.08 876.03 1144.30 878.80C1145.52 881.57 1146.80 886.50 1147.70 889.10C1148.60 891.70 1149.37 893.52 1149.70 894.40M1149.70 894.40C1153.75 888.04 1166.37 870.25 1174.00 856.25C1181.63 842.25 1188.82 825.86 1195.50 810.40C1202.18 794.94 1208.43 779.03 1214.10 763.50C1219.77 747.97 1226.93 724.92 1229.50 717.20" stroke="#f8f848" stroke-width="2.4" fill="none" stroke-linejoin="round"/></g>
</svg>
</body></html>
